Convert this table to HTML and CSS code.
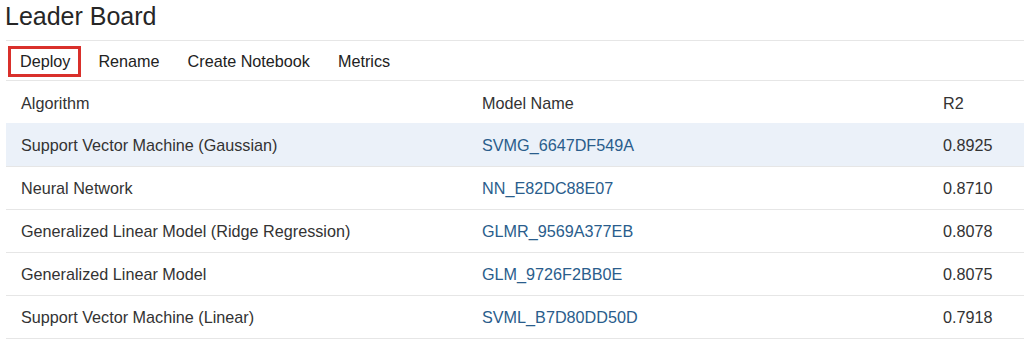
FILE: index.html
```html
<!DOCTYPE html>
<html>
<head>
<meta charset="utf-8">
<link rel="stylesheet" href="styles.css">
</head>
<body>
<div class="page">
  <h1 class="title">Leader Board</h1>
  <div class="toolbar">
    <button class="tool tool-active">Deploy</button>
    <button class="tool">Rename</button>
    <button class="tool">Create Notebook</button>
    <button class="tool">Metrics</button>
  </div>
  <table class="board">
    <thead>
      <tr><th class="c-alg">Algorithm</th><th class="c-model">Model Name</th><th class="c-r2">R2</th></tr>
    </thead>
    <tbody>
      <tr class="selected"><td>Support Vector Machine (Gaussian)</td><td><a class="link">SVMG_6647DF549A</a></td><td>0.8925</td></tr>
      <tr><td>Neural Network</td><td><a class="link">NN_E82DC88E07</a></td><td>0.8710</td></tr>
      <tr><td>Generalized Linear Model (Ridge Regression)</td><td><a class="link">GLMR_9569A377EB</a></td><td>0.8078</td></tr>
      <tr><td>Generalized Linear Model</td><td><a class="link">GLM_9726F2BB0E</a></td><td>0.8075</td></tr>
      <tr><td>Support Vector Machine (Linear)</td><td><a class="link">SVML_B7D80DD50D</a></td><td>0.7918</td></tr>
    </tbody>
  </table>
</div>
</body>
</html>
```
FILE: styles.css
```css
* { box-sizing: border-box; }
html, body { margin: 0; padding: 0; background: #fff; }
body {
  font-family: "Liberation Sans", Arial, sans-serif;
  color: #333;
}
.page { padding-left: 6px; }
.title {
  margin: 0 0 0 -1px;
  font-weight: normal;
  font-size: 25px;
  line-height: 32px;
  height: 40px;
  color: #262626;
}
.toolbar {
  display: flex;
  align-items: center;
  gap: 5px;
  height: 41px;
  padding-top: 2px;
  border-top: 1px solid #e6e6e6;
  border-bottom: 1px solid #e6e6e6;
}
.tool {
  font-family: inherit;
  font-size: 16.2px;
  color: #222;
  background: none;
  border: 3px solid transparent;
  height: 31px;
  padding: 0 8px 0 9px;
  cursor: pointer;
}
.tool:first-child { margin-left: 2px; }
.tool-active { border-color: #d9302b; }
.board {
  width: 100%;
  border-collapse: collapse;
  font-size: 16.2px;
}
.board th, .board td {
  text-align: left;
  font-weight: normal;
  height: 43px;
  padding: 2px 0 0 15px;
  border-bottom: 1px solid #e6e6e6;
  color: #333;
}
.board th { border-bottom: none; height: 42px; }
.c-alg { width: 461px; }
.c-model { width: 461px; }
.selected td { background: #ebf1f9; }
.link { color: #2a5d8c; text-decoration: none; }
```
